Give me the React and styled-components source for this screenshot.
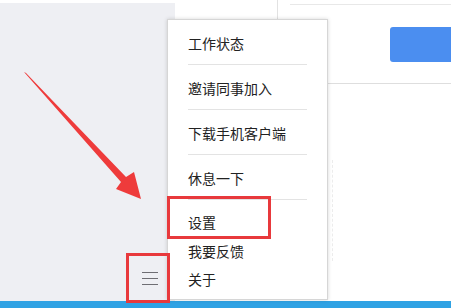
import React from 'react';
import styled, { createGlobalStyle } from 'styled-components';

const menuItems = [
  { label: '工作状态', height: 45, divider: true },
  { label: '邀请同事加入', height: 45, divider: true },
  { label: '下载手机客户端', height: 45, divider: true },
  { label: '休息一下', height: 45, divider: true },
  { label: '设置', height: 37, pad: 7 },
  { label: '我要反馈', height: 28 },
  { label: '关于', height: 28 },
];

export default function App() {
  return (
    <>
      <GlobalStyle />
      <Screen>
        <Body>
          <Sidebar>
            <MenuButton type='button' aria-label='menu'>
              <Bar />
              <Bar />
              <Bar />
            </MenuButton>
          </Sidebar>
          <Main>
            <TopArea>
              <SideColumn />
              <HeaderRight>
                <SearchLine />
                <PrimaryButton type='button' />
              </HeaderRight>
            </TopArea>
            <ContentArea>
              <DashedGuide />
            </ContentArea>
          </Main>
        </Body>
        <Taskbar />

        <PopupMenu>
          {menuItems.map((item) => (
            <MenuItem key={item.label} $height={item.height} $pad={item.pad || 0}>
              <MenuLabel>{item.label}</MenuLabel>
              {item.divider && <Divider />}
            </MenuItem>
          ))}
        </PopupMenu>

        <Arrow width='451' height='308' viewBox='0 0 451 308'>
          <polygon points='24,72 26,73 126,177 134,172 141,199 116,189 121,182' fill='#ee3b3b' />
        </Arrow>
        <HighlightBox $left={167} $top={196} $width={104} $height={43} />
        <HighlightBox $left={126} $top={253} $width={44} $height={50} />
      </Screen>
    </>
  );
}

const GlobalStyle = createGlobalStyle`
  body {
    margin: 0;
    font-family: "Noto Sans CJK SC", "Noto Sans", sans-serif;
  }
`;

const Screen = styled.div`
  position: relative;
  width: 451px;
  height: 308px;
  overflow: hidden;
  background: #fff;
  display: flex;
  flex-direction: column;
`;

const Body = styled.div`
  flex: 1;
  display: flex;
`;

const Sidebar = styled.aside`
  width: 175px;
  margin-top: 3px;
  background: #eeeff3;
  display: flex;
  flex-direction: column;
  justify-content: flex-end;
  align-items: flex-end;
  padding: 0 17px 16px 0;
  box-sizing: border-box;
`;

const MenuButton = styled.button`
  width: 16px;
  height: 13px;
  padding: 0;
  border: none;
  background: transparent;
  display: flex;
  flex-direction: column;
  justify-content: space-between;
`;

const Bar = styled.span`
  display: block;
  height: 1px;
  width: 16px;
  background: #6e6e73;
`;

const Main = styled.main`
  flex: 1;
  display: flex;
  flex-direction: column;
`;

const TopArea = styled.div`
  height: 83px;
  display: flex;
  border-bottom: 1px solid #dedede;
`;

const SideColumn = styled.div`
  width: 102px;
  border-right: 1px solid #e2e2e2;
`;

const HeaderRight = styled.div`
  flex: 1;
  display: flex;
  flex-direction: column;
  align-items: flex-end;
  padding-top: 4px;
`;

const SearchLine = styled.div`
  align-self: stretch;
  margin-left: 12px;
  border-top: 1px solid #e8e8e8;
`;

const PrimaryButton = styled.button`
  width: 61px;
  height: 35px;
  margin-top: 22px;
  border: none;
  border-radius: 3px 0 0 3px;
  background: #4b8ef0;
`;

const ContentArea = styled.div`
  flex: 1;
  display: flex;
  padding: 76px 0 40px 157px;
`;

const DashedGuide = styled.div`
  width: 0;
  border-left: 1px dashed #ececec;
`;

const Taskbar = styled.footer`
  height: 7px;
  background: #2fa2e4;
`;

const PopupMenu = styled.ul`
  position: absolute;
  left: 167px;
  top: 19px;
  width: 161px;
  height: 281px;
  margin: 0;
  padding: 0;
  box-sizing: border-box;
  list-style: none;
  background: #fff;
  border: 1px solid #d6d6d6;
  box-shadow: 0 0 4px rgba(0, 0, 0, 0.16);
`;

const MenuItem = styled.li`
  position: relative;
  height: ${({ $height }) => $height}px;
  padding: ${({ $pad }) => $pad}px 0 0 20px;
  box-sizing: border-box;
  display: flex;
  align-items: center;
  font-size: 14px;
  color: #222;
`;

const MenuLabel = styled.span`
  line-height: 1;
`;

const Divider = styled.span`
  position: absolute;
  left: 20px;
  right: 20px;
  bottom: 0;
  height: 1px;
  background: #e3e3e3;
`;

const Arrow = styled.svg`
  position: absolute;
  left: 0;
  top: 0;
  pointer-events: none;
`;

const HighlightBox = styled.div`
  position: absolute;
  left: ${({ $left }) => $left}px;
  top: ${({ $top }) => $top}px;
  width: ${({ $width }) => $width}px;
  height: ${({ $height }) => $height}px;
  box-sizing: border-box;
  border: 3px solid #e8393c;
`;
